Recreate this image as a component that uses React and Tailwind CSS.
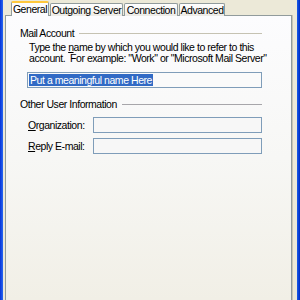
export default function App() {
    const tabs = [
        { label: "General", w: "w-[38px]", active: true },
        { label: "Outgoing Server", w: "w-[73px]" },
        { label: "Connection", w: "w-[54px]" },
        { label: "Advanced", w: "w-[46px]" },
    ];

    return (
        <div className="w-[300px] h-[300px] flex overflow-hidden text-[10.5px] tracking-[-0.45px] leading-[11px] text-black" style={{ fontFamily: '"Liberation Sans", Arial, sans-serif' }}>
            <div className="w-[3px] shrink-0 bg-gradient-to-r from-[#0831d9] to-[#2a66f0]" />

            <div className="flex-1 min-w-0 bg-[#ece9d8] pl-[2px] pr-[5px] pt-[2px] flex flex-col">
                {/* tab strip */}
                <div className="flex items-end h-[14px] pl-[6px] relative z-10 -mb-px">
                    {tabs.map((t) =>
                        t.active ? (
                            <div key={t.label} className={`${t.w} shrink-0 h-[15px] border border-b-0 border-[#919b9c] rounded-t-[2px] border-t-2 border-t-[#ffc83c] bg-[#fcfcfe] flex items-center justify-center whitespace-nowrap`}>
                                {t.label}
                            </div>
                        ) : (
                            <div key={t.label} className={`${t.w} shrink-0 h-[13px] ml-px border border-b-0 border-[#919b9c] rounded-t-[2px] bg-gradient-to-b from-white to-[#ecebe6] flex items-center justify-center whitespace-nowrap`}>
                                {t.label}
                            </div>
                        )
                    )}
                </div>

                {/* panel */}
                <div className="flex-1 min-w-0 border border-b-0 border-[#919b9c] bg-gradient-to-b from-[#fcfcfe] via-[#f7f7f5] to-[#f1efe6] pl-[14px] pr-[29px] pt-[12px] shadow-[1px_0_0_#c8c5b4]">
                    <div className="flex items-center h-[11px]">
                        <span className="whitespace-nowrap">Mail Account</span>
                        <div className="flex-1 h-px bg-[#c5c2b2] ml-[5px]" />
                    </div>

                    <div className="pl-[9px] pt-[3px]">
                        <p className="whitespace-nowrap">
                            Type the <span className="underline">n</span>ame by which you would like to refer to this
                            <br />
                            account.&nbsp; For example: "Work" or "Microsoft Mail Server"
                        </p>
                        <div className="mt-[8px] -ml-[2px] h-[16px] w-[235px] border border-[#7f9db9] bg-[#fafafa] flex items-center pl-px">
                            <span className="bg-[#316ac5] text-white px-px leading-[12px] whitespace-nowrap">Put a meaningful name Here</span>
                        </div>
                    </div>

                    <div className="flex items-center h-[11px] mt-[11px]">
                        <span className="whitespace-nowrap">Other User Information</span>
                        <div className="flex-1 h-px bg-[#a7a6aa] ml-[5px]" />
                    </div>

                    <div className="pl-[8px] pt-[7px] flex flex-col gap-[5px]">
                        <div className="flex items-center">
                            <span className="w-[65px] whitespace-nowrap"><span className="underline">O</span>rganization:</span>
                            <div className="h-[16px] w-[169px] border border-[#7f9db9] bg-[#f7f7f7]" />
                        </div>
                        <div className="flex items-center">
                            <span className="w-[65px] whitespace-nowrap"><span className="underline">R</span>eply E-mail:</span>
                            <div className="h-[16px] w-[169px] border border-[#7f9db9] bg-[#f7f7f7]" />
                        </div>
                    </div>
                </div>
            </div>

            <div className="w-[3px] shrink-0 bg-gradient-to-r from-[#1c5ae8] to-[#0029c4]" />
        </div>
    );
}
